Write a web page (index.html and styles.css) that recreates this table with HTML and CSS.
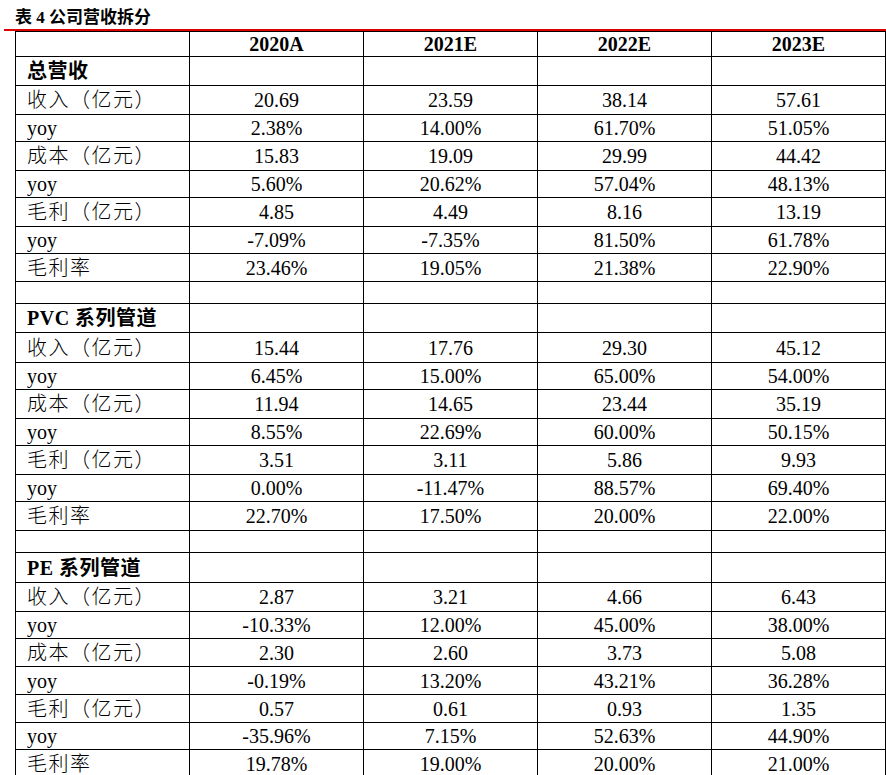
FILE: index.html
```html
<!DOCTYPE html>
<html lang="zh-CN">
<head>
<meta charset="utf-8">
<title>表 4 公司营收拆分</title>
<link rel="stylesheet" href="styles.css">
</head>
<body>
<div class="title">表 4 公司营收拆分</div>
<div class="rule"></div>
<div class="sheet">
  <div class="row h24 head"><div></div><div>2020A</div><div>2021E</div><div>2022E</div><div>2023E</div></div>

  <div class="row h28"><div class="lbl sec">总营收</div><div></div><div></div><div></div><div></div></div>
  <div class="row h28"><div class="lbl cn">收入（亿元）</div><div>20.69</div><div>23.59</div><div>38.14</div><div>57.61</div></div>
  <div class="row h26"><div class="lbl">yoy</div><div>2.38%</div><div>14.00%</div><div>61.70%</div><div>51.05%</div></div>
  <div class="row h28"><div class="lbl cn">成本（亿元）</div><div>15.83</div><div>19.09</div><div>29.99</div><div>44.42</div></div>
  <div class="row h26"><div class="lbl">yoy</div><div>5.60%</div><div>20.62%</div><div>57.04%</div><div>48.13%</div></div>
  <div class="row h28"><div class="lbl cn">毛利（亿元）</div><div>4.85</div><div>4.49</div><div>8.16</div><div>13.19</div></div>
  <div class="row h26"><div class="lbl">yoy</div><div>-7.09%</div><div>-7.35%</div><div>81.50%</div><div>61.78%</div></div>
  <div class="row h27"><div class="lbl cn">毛利率</div><div>23.46%</div><div>19.05%</div><div>21.38%</div><div>22.90%</div></div>
  <div class="row h21"><div></div><div></div><div></div><div></div><div></div></div>

  <div class="row h28"><div class="lbl sec">PVC 系列管道</div><div></div><div></div><div></div><div></div></div>
  <div class="row h29"><div class="lbl cn">收入（亿元）</div><div>15.44</div><div>17.76</div><div>29.30</div><div>45.12</div></div>
  <div class="row h26"><div class="lbl">yoy</div><div>6.45%</div><div>15.00%</div><div>65.00%</div><div>54.00%</div></div>
  <div class="row h28"><div class="lbl cn">成本（亿元）</div><div>11.94</div><div>14.65</div><div>23.44</div><div>35.19</div></div>
  <div class="row h26"><div class="lbl">yoy</div><div>8.55%</div><div>22.69%</div><div>60.00%</div><div>50.15%</div></div>
  <div class="row h28"><div class="lbl cn">毛利（亿元）</div><div>3.51</div><div>3.11</div><div>5.86</div><div>9.93</div></div>
  <div class="row h26"><div class="lbl">yoy</div><div>0.00%</div><div>-11.47%</div><div>88.57%</div><div>69.40%</div></div>
  <div class="row h28"><div class="lbl cn">毛利率</div><div>22.70%</div><div>17.50%</div><div>20.00%</div><div>22.00%</div></div>
  <div class="row h21"><div></div><div></div><div></div><div></div><div></div></div>

  <div class="row h29"><div class="lbl sec">PE 系列管道</div><div></div><div></div><div></div><div></div></div>
  <div class="row h28"><div class="lbl cn">收入（亿元）</div><div>2.87</div><div>3.21</div><div>4.66</div><div>6.43</div></div>
  <div class="row h26"><div class="lbl">yoy</div><div>-10.33%</div><div>12.00%</div><div>45.00%</div><div>38.00%</div></div>
  <div class="row h27"><div class="lbl cn">成本（亿元）</div><div>2.30</div><div>2.60</div><div>3.73</div><div>5.08</div></div>
  <div class="row h27"><div class="lbl">yoy</div><div>-0.19%</div><div>13.20%</div><div>43.21%</div><div>36.28%</div></div>
  <div class="row h27"><div class="lbl cn">毛利（亿元）</div><div>0.57</div><div>0.61</div><div>0.93</div><div>1.35</div></div>
  <div class="row h26"><div class="lbl">yoy</div><div>-35.96%</div><div>7.15%</div><div>52.63%</div><div>44.90%</div></div>
  <div class="row h28"><div class="lbl cn">毛利率</div><div>19.78%</div><div>19.00%</div><div>20.00%</div><div>21.00%</div></div>
</div>
</body>
</html>
```

FILE: styles.css
```css
html, body {
  margin: 0;
  padding: 0;
  background: #fff;
  overflow: hidden;
}

body {
  font-family: "Liberation Serif", "Noto Sans CJK SC", serif;
  color: #000;
}

.title {
  height: 29px;
  box-sizing: border-box;
  padding: 8px 0 0 15px;
  line-height: 20px;
  font-family: "Liberation Serif", "Noto Sans CJK SC", sans-serif;
  font-weight: 700;
  font-size: 17px;
}

.rule {
  margin-left: 4px;
  height: 2px;
  background: #e00000;
}

.sheet {
  margin-left: 15px;
  width: 871px;
  box-sizing: border-box;
  padding: 1px;
  background: #000;
  display: flex;
  flex-direction: column;
  gap: 1px;
}

.row {
  display: grid;
  grid-template-columns: repeat(5, 1fr);
  grid-template-rows: 100%;
  gap: 1px;
  overflow: hidden;
}

.row > div {
  background: #fff;
  display: flex;
  align-items: center;
  justify-content: center;
  font-size: 20px;
  line-height: 20px;
  white-space: nowrap;
  min-height: 0;
}

.row > .lbl {
  justify-content: flex-start;
  padding-left: 11px;
}

.cn {
  letter-spacing: 1.5px;
  font-weight: 300;
}

.sec {
  font-weight: 700;
  letter-spacing: 0.5px;
}

.head > div {
  font-weight: 700;
}

.h21 { height: 21px; }
.h24 { height: 24px; }
.h26 { height: 26px; }
.h27 { height: 27px; }
.h28 { height: 28px; }
.h29 { height: 29px; }
```
